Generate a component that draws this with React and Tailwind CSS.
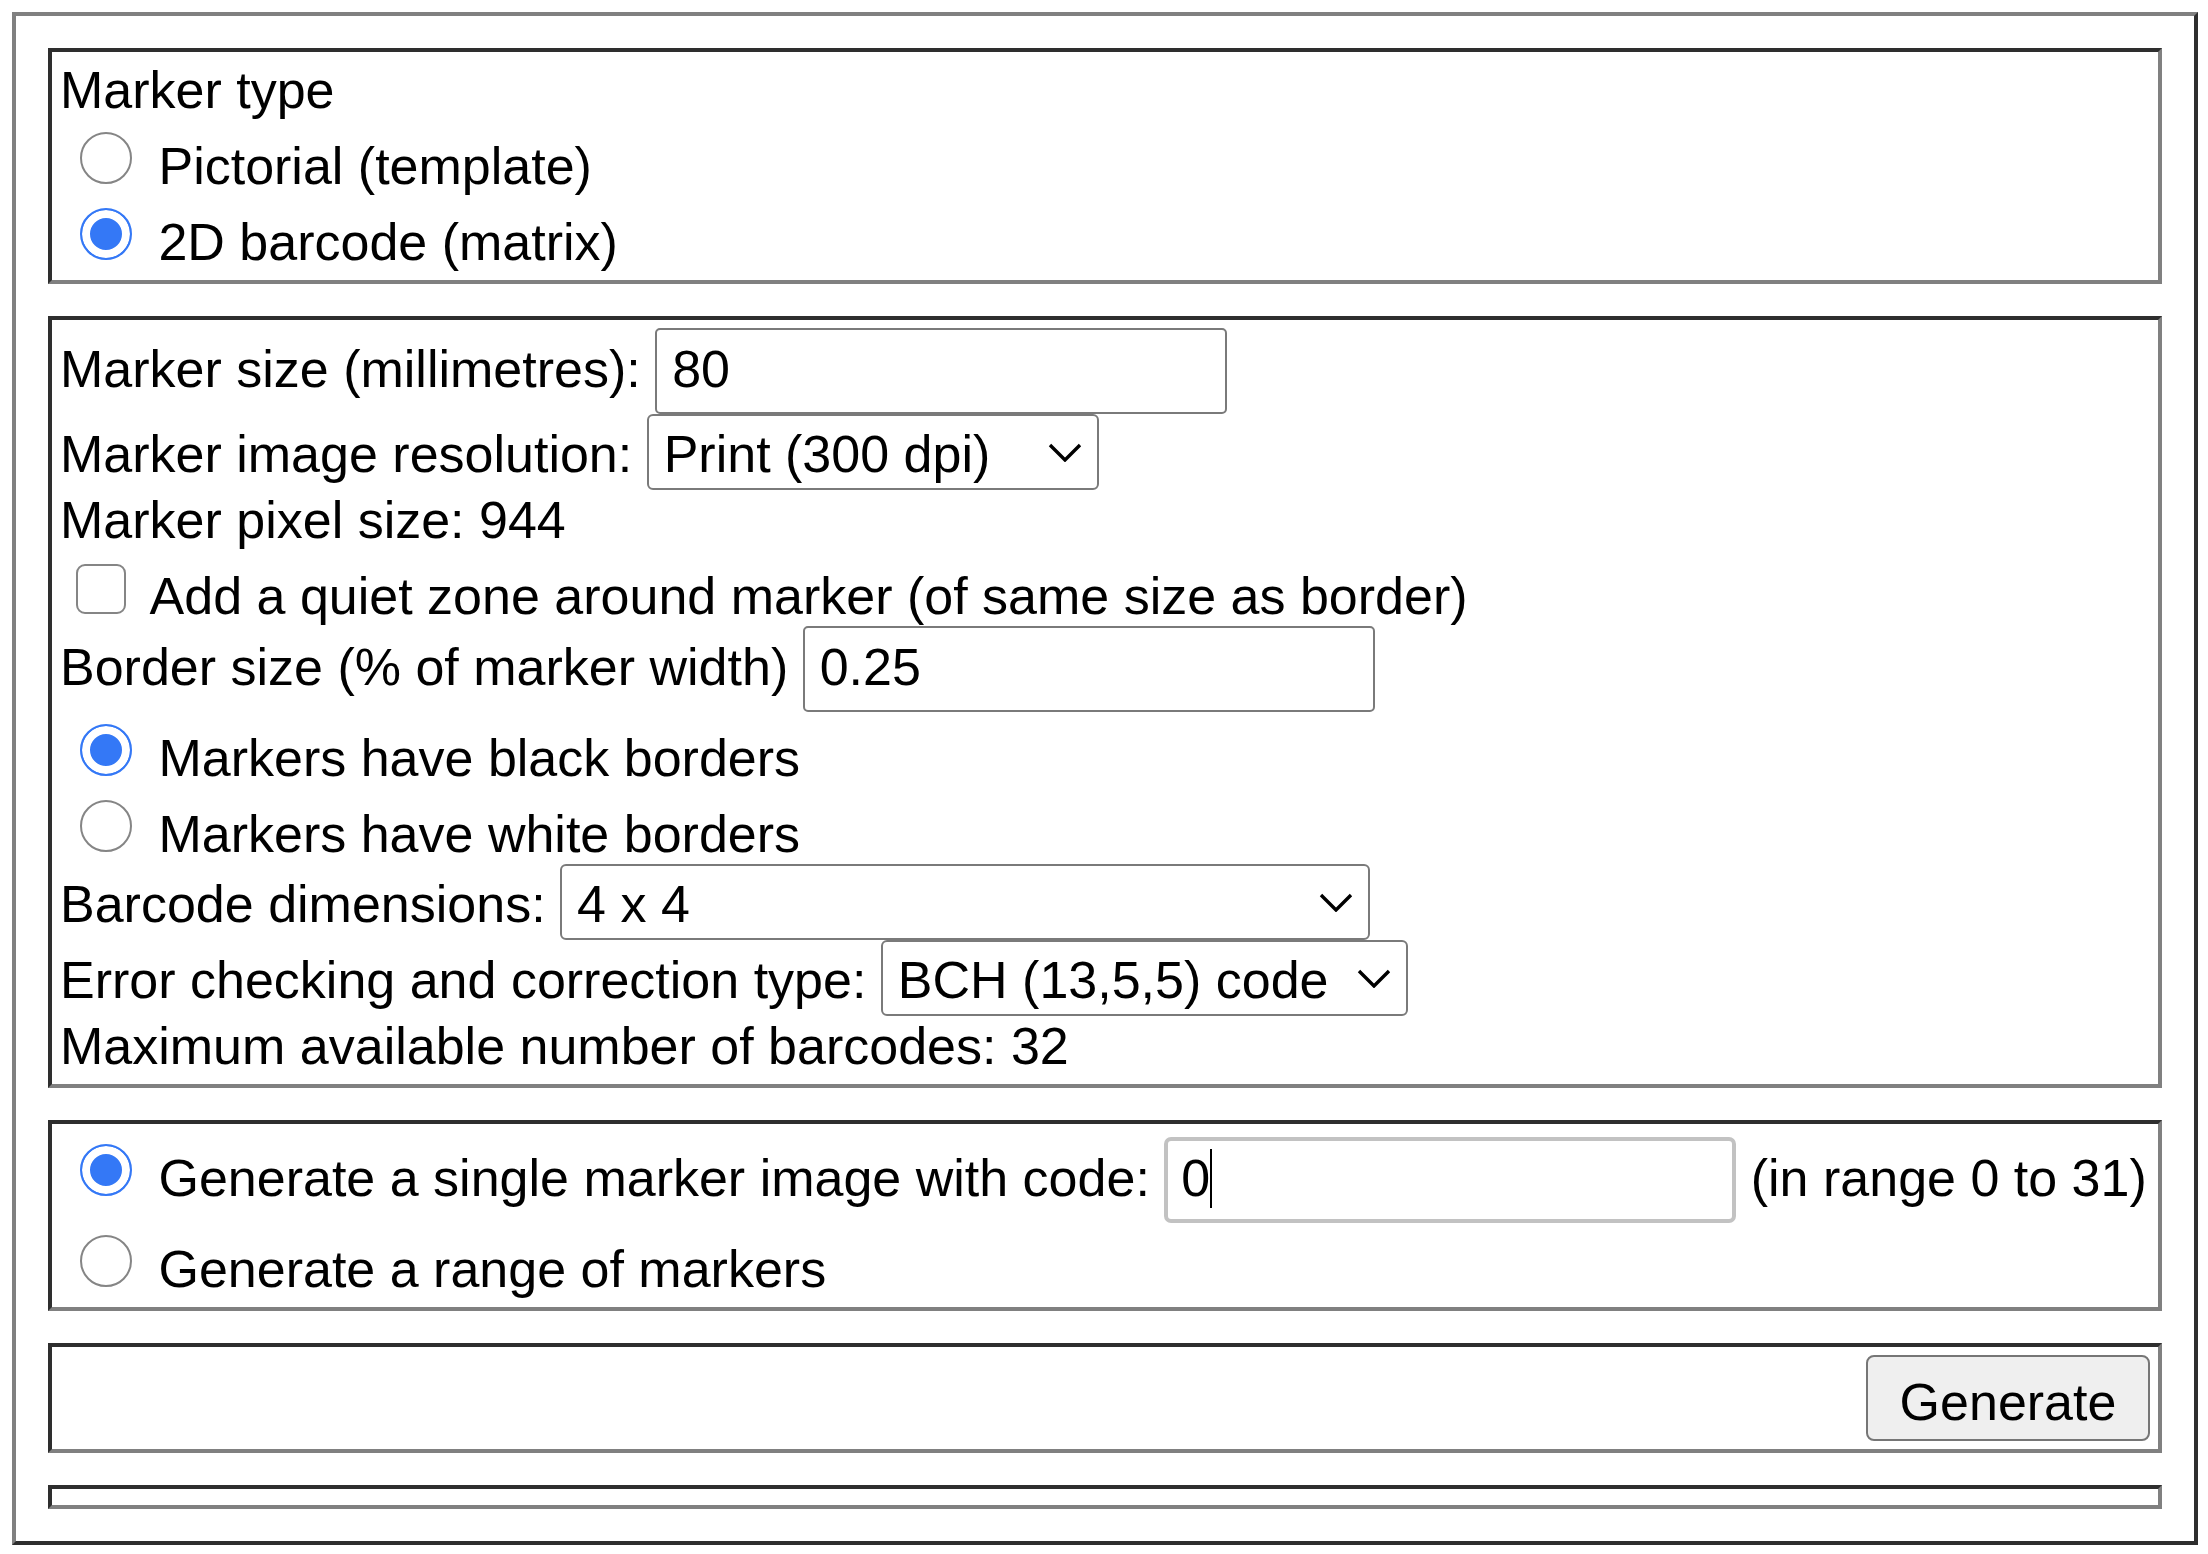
import React from "react";

function Radio({ checked }) {
  return checked ? (
    <span className="inline-block w-[52px] h-[52px] mt-[12px] ml-[20px] mr-[12px] rounded-full border-2 border-[#3478f6] bg-[#3478f6] shadow-[inset_0_0_0_8px_#ffffff]" />
  ) : (
    <span className="inline-block w-[52px] h-[52px] mt-[12px] ml-[20px] mr-[12px] rounded-full border-2 border-[#858585] bg-white" />
  );
}

function Checkbox() {
  return (
    <span className="inline-block w-[50px] h-[50px] mt-[14px] ml-[16px] mr-[12px] rounded-[9px] border-2 border-[#858585] bg-white" />
  );
}

function Chevron() {
  return (
    <svg
      className="ml-auto mt-[19px] shrink-0"
      width="34"
      height="19"
      viewBox="0 0 34 19"
    >
      <polyline
        points="2,2 17,17 32,2"
        fill="none"
        stroke="#000"
        strokeWidth="3.4"
        strokeLinejoin="miter"
      />
    </svg>
  );
}

function Box({ children }) {
  return (
    <div className="border-4 border-t-[#2e2e2e] border-l-[#2e2e2e] border-r-[#808080] border-b-[#808080] p-[8px]">
      {children}
    </div>
  );
}

export default function App() {
  return (
    <div className="font-['Liberation_Sans',Arial,Helvetica,sans-serif] text-[52px] leading-[60px] text-black bg-white min-h-[1554px] pt-[12px] pl-[12px]">
      <div className="w-[2186px] border-4 border-t-[#808080] border-l-[#808080] border-r-[#2e2e2e] border-b-[#2e2e2e] p-[32px] flex flex-col gap-[32px]">
        <Box>
          <div className="whitespace-nowrap">Marker type</div>
          <div className="whitespace-nowrap">
            <Radio />{" "}Pictorial (template)
          </div>
          <div className="whitespace-nowrap">
            <Radio checked />{" "}2D barcode (matrix)
          </div>
        </Box>

        <Box>
          <div className="whitespace-nowrap">
            Marker size (millimetres):{" "}
            <span className="inline-block w-[572px] h-[86px] border-2 border-[#7a7a7a] rounded-[5px] pl-[15px] pt-[9px] leading-[60px] align-baseline">
              80
            </span>
          </div>
          <div className="whitespace-nowrap">
            Marker image resolution:{" "}
            <span className="inline-flex items-start w-[452px] h-[76px] border-2 border-[#7a7a7a] rounded-[6px] pl-[15px] pr-[15px] pt-[8px] align-baseline">
              <span className="leading-[60px] whitespace-nowrap">Print (300 dpi)</span>
              <Chevron />
            </span>
          </div>
          <div className="whitespace-nowrap">Marker pixel size: 944</div>
          <div className="whitespace-nowrap">
            <Checkbox />{" "}Add a quiet zone around marker (of same size as border)
          </div>
          <div className="whitespace-nowrap">
            Border size (% of marker width){" "}
            <span className="inline-block w-[572px] h-[86px] border-2 border-[#7a7a7a] rounded-[5px] pl-[15px] pt-[9px] leading-[60px] align-baseline">
              0.25
            </span>
          </div>
          <div className="whitespace-nowrap">
            <Radio checked />{" "}Markers have black borders
          </div>
          <div className="whitespace-nowrap">
            <Radio />{" "}Markers have white borders
          </div>
          <div className="whitespace-nowrap">
            Barcode dimensions:{" "}
            <span className="inline-flex items-start w-[810px] h-[76px] border-2 border-[#7a7a7a] rounded-[6px] pl-[15px] pr-[15px] pt-[8px] align-baseline">
              <span className="leading-[60px] whitespace-nowrap">4 x 4</span>
              <Chevron />
            </span>
          </div>
          <div className="whitespace-nowrap">
            Error checking and correction type:{" "}
            <span className="inline-flex items-start w-[527px] h-[76px] border-2 border-[#7a7a7a] rounded-[6px] pl-[15px] pr-[15px] pt-[8px] align-baseline">
              <span className="leading-[60px] whitespace-nowrap">BCH (13,5,5) code</span>
              <Chevron />
            </span>
          </div>
          <div className="whitespace-nowrap">Maximum available number of barcodes: 32</div>
        </Box>

        <Box>
          <div className="whitespace-nowrap">
            <Radio checked />{" "}Generate a single marker image with code:{" "}
            <span className="inline-block w-[572px] h-[86px] border-4 border-[#c2c2c2] rounded-[7px] pl-[13px] pt-[7px] leading-[60px] align-baseline">
              0
              <span className="inline-block w-[2px] h-[59px] bg-black align-[-12px]" />
            </span>{" "}
            (in range 0 to 31)
          </div>
          <div className="whitespace-nowrap">
            <Radio />{" "}Generate a range of markers
          </div>
        </Box>

        <Box>
          <div className="flex justify-end">
            <button
              type="button"
              className="w-[284px] h-[86px] bg-[#efefef] border-2 border-[#767676] rounded-[8px] pt-[8px] leading-[60px] text-[52px] text-black"
            >
              Generate
            </button>
          </div>
        </Box>

        <Box>{null}</Box>
      </div>
    </div>
  );
}
